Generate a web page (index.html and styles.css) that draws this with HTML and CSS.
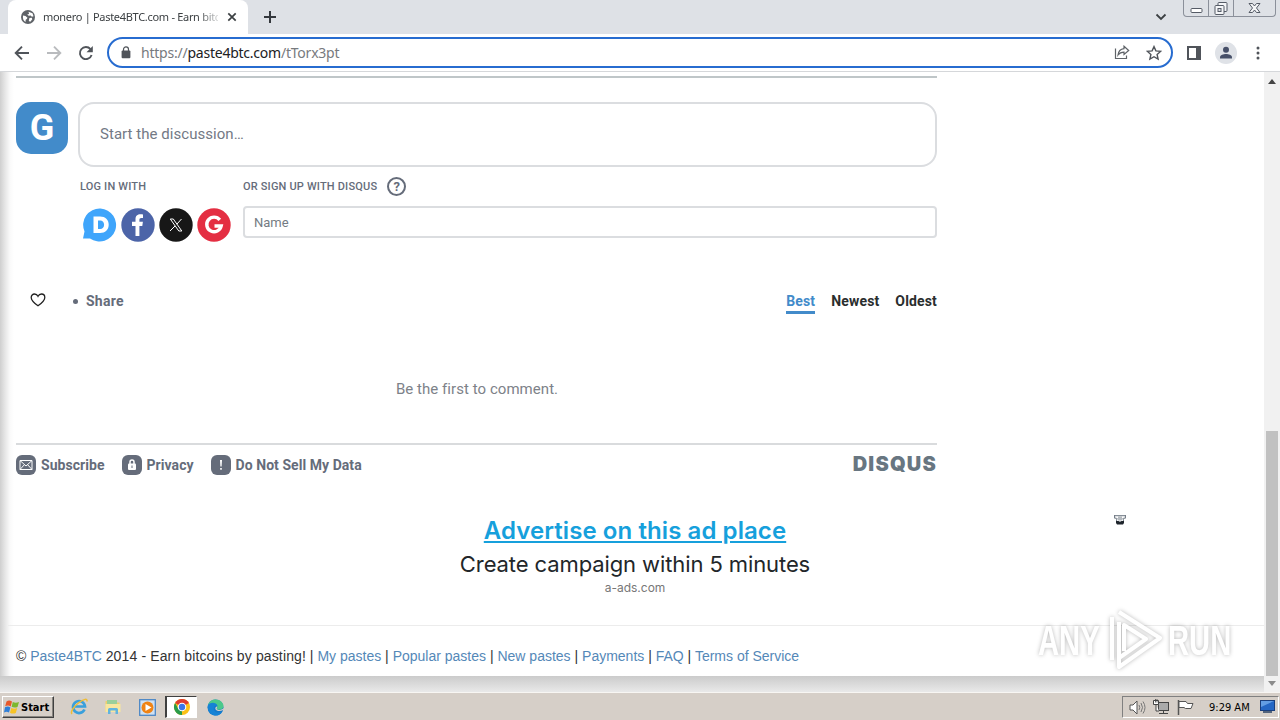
FILE: index.html
```html
<!DOCTYPE html>
<html lang="en">
<head>
  <meta charset="UTF-8" />
  <meta name="viewport" content="width=device-width, initial-scale=1" />
  <title>monero | Paste4BTC.com - Earn bitcoins by pasting!</title>
  <link rel="stylesheet" href="styles.css">
</head>
<body>
  <!-- Tab strip -->
  <div class="tabstrip">
    <div class="tab">
      <svg class="favicon" viewBox="0 0 14 14"><circle cx="7" cy="7" r="7" fill="#5f6368"/><path d="M2 5.500 4.500 6l2 1.700-.7 1.400-1.100.6-.2 2.200C2.700 11 1.500 9 2 5.500zM7.500 1.700l4 1.600 1 3-1.600.4-1.200-1.200-2 .3-1.500-1.300 1.900-.6zM8.400 8l2.400-.2.5 1.400-2 2.600-1.500-.8z" fill="#fff"/></svg>
      <span class="tab-title">monero | Paste4BTC.com - Earn bitc</span>
      <svg class="tab-close" viewBox="0 0 10 10"><path d="M1.300 1.300l7.400 7.400M8.700 1.300L1.300 8.700" stroke="#3c4043" stroke-width="1.700"/></svg>
    </div>
    <svg class="new-tab" viewBox="0 0 12 12"><path d="M6 0v12M0 6h12" stroke="#34383d" stroke-width="2"/></svg>
    <svg class="tab-search" viewBox="0 0 12 8"><path d="M1.500 1.500L6 6l4.500-4.500" fill="none" stroke="#3c4043" stroke-width="1.800"/></svg>
    <div class="win-buttons">
      <span class="win-btn min"><svg width="13" height="16" viewBox="0 0 13 16"><rect x="1" y="8.500" width="11" height="4" rx="1" fill="#fff" stroke="#555b66"/></svg></span>
      <span class="win-btn max"><svg width="14" height="16" viewBox="0 0 14 16"><rect x="4" y="2.500" width="9" height="9" rx="1" fill="#f4f5f7" stroke="#555b66"/><rect x="1" y="5.500" width="9" height="9" rx="1" fill="#f4f5f7" stroke="#555b66"/><rect x="4" y="8.500" width="3" height="3" fill="#dee1e6" stroke="#555b66"/></svg></span>
      <span class="win-btn close"><svg width="13" height="16" viewBox="0 0 13 16"><path d="M1 3.500h3.500L6.500 6l2-2.500H12L8.500 8l3.500 4.500H8.500l-2-2.500-2 2.500H1L4.500 8z" fill="#f4f5f7" stroke="#555b66"/></svg></span>
    </div>
  </div>

  <!-- Toolbar -->
  <div class="toolbar">
    <svg class="nav-icon" width="16" height="16" viewBox="0 0 16 16"><path d="M15 8H2M8 1.700L1.700 8 8 14.300" fill="none" stroke="#50545a" stroke-width="1.900"/></svg>
    <svg class="nav-icon" width="16" height="16" viewBox="0 0 16 16"><path d="M1 8h13M8 1.700L14.300 8 8 14.300" fill="none" stroke="#b9bbbe" stroke-width="1.900"/></svg>
    <svg class="nav-icon" width="16" height="16" viewBox="0 0 16 16"><path d="M13.600 10A6 6 0 1 1 12.500 4.200" fill="none" stroke="#50545a" stroke-width="1.900"/><path d="M14.800 1v6.300H8.500z" fill="#50545a"/></svg>
    <div class="omnibox">
      <svg class="lock" width="10" height="13" viewBox="0 0 10 13"><rect x=".6" y="4.500" width="8.800" height="7.800" rx="1" fill="#50545a"/><path d="M2.500 5V3.400a2.500 2.500 0 0 1 5 0V5" fill="none" stroke="#50545a" stroke-width="1.200"/></svg>
      <span class="url">https://<b>paste4btc.com</b>/tTorx3pt</span>
      <svg class="share-icon" width="16" height="15" viewBox="0 0 16 15"><path d="M1.500 3.500v10h11v-3" fill="none" stroke="#5f6368" stroke-width="1.200"/><path d="M10 1.300L14.700 5.500 10 9.500V7.200C7.500 7.200 5.500 8 4 10c.4-3.500 2.500-6 6-6.400z" fill="none" stroke="#5f6368" stroke-width="1.200"/></svg>
      <svg class="star-icon" width="16" height="16" viewBox="0 0 16 16"><path d="M8 1.600l1.900 4.300 4.700.5-3.500 3.100 1 4.600L8 11.700l-4.100 2.400 1-4.600L1.400 6.400l4.700-.5z" fill="none" stroke="#50545a" stroke-width="1.400"/></svg>
    </div>
    <svg class="side-panel" width="14" height="14" viewBox="0 0 14 14"><rect x="1" y="1" width="12" height="12" fill="none" stroke="#50545a" stroke-width="2"/><path d="M9 1h4v12H9z" fill="#50545a"/></svg>
    <svg class="avatar" width="22" height="22" viewBox="0 0 22 22"><circle cx="11" cy="11" r="11" fill="#dfe2e7"/><circle cx="11" cy="7.700" r="3" fill="#475069"/><path d="M5 16.500v-1.300c0-2 3.500-3.200 6-3.200s6 1.200 6 3.200v1.300z" fill="#475069"/></svg>
    <svg class="menu-dots" width="4" height="14" viewBox="0 0 4 14"><circle cx="2" cy="2" r="1.500" fill="#50545a"/><circle cx="2" cy="7" r="1.500" fill="#50545a"/><circle cx="2" cy="12" r="1.500" fill="#50545a"/></svg>
  </div>

  <!-- Page -->
  <div class="viewport">
    <div class="page">
      <div class="sheet">
        <div class="disqus">
          <div class="composer">
            <div class="user-g">G</div>
            <div class="discussion">Start the discussion…</div>
          </div>

          <div class="auth">
            <div class="login">
              <div class="label">LOG IN WITH</div>
              <div class="social">
                <svg viewBox="0 0 34 34"><path d="M17.500.5A16.500 16.500 0 1 1 7 30.400L0 30.500l1.500-7A16.500 16.500 0 0 1 17.500.5z" fill="#3fa5fb"/><path d="M10.500 8.500h6.600c5.200 0 8.600 3.200 8.600 8.300s-3.400 8.200-8.600 8.200h-6.600zM15 12.500V21h2.200c2.400 0 3.900-1.600 3.900-4.200s-1.500-4.300-3.900-4.300z" fill="#fff"/></svg>
                <svg viewBox="0 0 34 34"><circle cx="17" cy="17" r="16.700" fill="#4c64a8"/><path d="M14.500 28V18H11v-4.200h3.500v-2.600c0-3.500 2-4.900 5-4.900 1 0 2 .1 2.500.2V10h-1.700c-1.500 0-1.900.8-1.900 1.900v1.900h3.500L21.300 18h-2.900v10z" fill="#fff"/></svg>
                <svg viewBox="0 0 34 34"><circle cx="17" cy="17" r="16.700" fill="#171717"/><path d="M11.300 11h3l8.500 12h-3zM22.500 11l-4.700 5.200M16 18l-5 5" fill="none" stroke="#fff" stroke-width="1"/></svg>
                <svg viewBox="0 0 34 34"><circle cx="17" cy="17" r="16.700" fill="#e42e42"/><path d="M22.800 11.900A7.300 7.300 0 1 0 24.200 18H17.500" fill="none" stroke="#fff" stroke-width="3.400"/></svg>
              </div>
            </div>
            <div class="signup">
              <div class="label">OR SIGN UP WITH DISQUS <span class="help">?</span></div>
              <div class="name-field">Name</div>
            </div>
          </div>

          <div class="actions">
            <svg class="heart" width="16" height="14" viewBox="0 0 16 14"><path d="M8 12.800C3.500 9.500 1.200 7 1.200 4.400 1.200 2.400 2.700 1 4.500 1 6 1 7.300 1.900 8 3.300 8.700 1.900 10 1 11.500 1c1.800 0 3.300 1.400 3.300 3.400 0 2.600-2.300 5.100-6.800 8.400z" fill="none" stroke="#222" stroke-width="1.300"/></svg>
            <span class="bullet"></span>
            <span class="share">Share</span>
            <div class="sort">
              <span class="active">Best</span>
              <span>Newest</span>
              <span>Oldest</span>
            </div>
          </div>

          <div class="empty">Be the first to comment.</div>

          <div class="disqus-footer">
            <span class="foot-link"><svg viewBox="0 0 20 20"><rect width="20" height="20" rx="6" fill="#656c7a"/><path d="M4 5.500h12v9H4zM4 5.500l6 5.500 6-5.500M4 14.500l4.300-4.700M16 14.500l-4.300-4.700" fill="none" stroke="#fff" stroke-width="1"/></svg>Subscribe</span>
            <span class="foot-link"><svg viewBox="0 0 20 20"><rect width="20" height="20" rx="6" fill="#656c7a"/><rect x="6" y="8.500" width="8" height="6.500" rx="1" fill="#fff"/><path d="M8 9V7a2 2 0 0 1 4 0v2" fill="none" stroke="#fff" stroke-width="1.500"/><path d="M10 10.500v2.500" stroke="#656c7a"/></svg>Privacy</span>
            <span class="foot-link"><svg viewBox="0 0 20 20"><rect width="20" height="20" rx="6" fill="#656c7a"/><path d="M9 5h2l-.4 6.500H9.400zM9.200 13h1.600v1.700H9.200z" fill="#fff"/></svg>Do Not Sell My Data</span>
            <span class="brand">DISQUS</span>
          </div>
        </div>

        <div class="ad">
          <a class="ad-title">Advertise on this ad place</a>
          <div class="ad-text">Create campaign within 5 minutes</div>
          <div class="ad-site">a-ads.com</div>
          <svg class="ad-badge" width="12" height="10" viewBox="0 0 12 10"><path d="M0 .7h12M.6.500v2.700h1.800M11.400.500v2.700H9.600M5 1.500v4M7 1.500v4M3 3l-.5 3M9 3l.5 3" fill="none" stroke="#5a6470" stroke-width=".9"/><path d="M2 6h2.500l1.500.7L7.500 6H10v2L9 9.500H3L2 8z" fill="#1e252c"/></svg>
        </div>

        <div class="site-footer">© <a>Paste4BTC</a> <span class="tagline">2014 - Earn bitcoins by pasting!</span> | <a>My pastes</a> | <a>Popular pastes</a> | <a>New pastes</a> | <a>Payments</a> | <a>FAQ</a> | <a>Terms of Service</a></div>
      </div>
    </div>
    <div class="scrollbar">
      <span class="arrow-up"></span>
      <span class="thumb"></span>
      <span class="arrow-down"></span>
    </div>

    <!-- Watermark over the page -->
    <div class="watermark">
      <span>ANY</span>
      <svg width="56" height="64" viewBox="0 0 56 64"><path d="M5 52V9M12 14v39M12 4l41 26-41 29V50l27-19L17 17v26" fill="none" stroke="#fff" stroke-width="4" stroke-linejoin="round"/></svg>
      <span>RUN</span>
    </div>
  </div>

  <!-- Taskbar -->
  <div class="taskbar">
    <div class="start">
      <svg width="16" height="16" viewBox="0 0 16 16"><path d="M2.500 2.500C4.500 1 6 1.300 8 2.500L6.700 7.500C5 6.300 3.200 6.300 1.200 7.300z" fill="#e8592b"/><path d="M8.800 2.900c2 1.100 4 1 6.200 0l-1.500 5c-2 1-4 .8-5.900-.1z" fill="#7cb82f"/><path d="M1 8.300c2-1 3.700-1 5.400.1L5 13.500c-1.700-1.200-3.400-1.100-5 0z" fill="#2f7fd8"/><path d="M7.300 8.900c2 1 3.900 1 5.900 0l-1.400 5c-2 1-4 .9-5.800-.2z" fill="#f7c325"/></svg>
      <span>Start</span>
    </div>
    <div class="task"><svg width="18" height="18" viewBox="0 0 18 18"><path d="M14.500 11.500A6 6 0 1 1 15 8.500H5" fill="none" stroke="#3aa0dc" stroke-width="2.700"/><path d="M2 16C0 14 4 8 9 4.500S17.500 0 17 3.500" fill="none" stroke="#efbd35" stroke-width="1.500"/></svg></div>
    <div class="task"><svg width="18" height="18" viewBox="0 0 18 18"><path d="M1.500 3h5l1 1.500h8V14h-14z" fill="#efd06b"/><path d="M3 2h10v4H3z" fill="#9bcf9a"/><path d="M1.500 6h15v8h-15z" fill="#f8e69f"/><path d="M4 16v-4.500Q4 10 5.500 10h7q1.500 0 1.500 1.500V16h-2.500v-3.500h-5V16z" fill="#62b4de"/></svg></div>
    <div class="task"><svg width="17" height="17" viewBox="0 0 17 17"><rect x=".7" y=".7" width="15.600" height="15.600" fill="#cfe1f3" stroke="#4c87c6" stroke-width="1.300"/><circle cx="8.500" cy="8.500" r="6" fill="#f08314"/><path d="M6.500 5l6 3.500-6 3.500z" fill="#fff"/></svg></div>
    <div class="task current"><svg width="18" height="18" viewBox="0 0 18 18"><circle cx="9" cy="9" r="8" fill="#fbc116"/><path d="M9 9L2.070 5A8 8 0 0 1 15.930 5z" fill="#df3c30"/><path d="M9 9v8A8 8 0 0 1 2.070 5L5.500 11z" fill="#2a9b4b"/><circle cx="9" cy="9" r="4.300" fill="#fff"/><circle cx="9" cy="9" r="3.200" fill="#3b76e8"/></svg></div>
    <div class="task"><svg width="17" height="17" viewBox="0 0 17 17"><circle cx="8.500" cy="8.500" r="8" fill="#1479ca"/><path d="M1 6C2.500 2 5 .5 8.500.5c5 0 8 3.500 8 6.500 0 2.500-2 3.800-4.500 3.800-1.500 0-2.300-.5-2.300-1.300 0-.6.7-1 .7-2.300C10.400 5 7 3.500 1 6z" fill="#4bc98b"/><path d="M1 6C4 2.500 9.500 3.500 10.400 7 8 6 6 8 7 11c1 2.500 4.500 3.500 8.300 1.700C13 16.500 9 17.300 6 16 2 14.500 0 10 1 6z" fill="#1683d5"/><path d="M10.300 7.500c-2 0-2.500 2-1.500 3.300 1.500 1.700 4.500 1.500 6.500.8 1.500-1 1.700-2.500 1.700-2.500-2 2.500-7.500 2.200-7.300.3z" fill="#d5d0c9"/></svg></div>
    <div class="tray">
      <svg width="17" height="15" viewBox="0 0 17 15"><path d="M1 5h3l4-4v13L4 10H1z" fill="#fff" stroke="#555"/><path d="M10 5q1.500 2.500 0 5M12 3q3 4.500 0 9M14 1.500q4 6 0 12" fill="none" stroke="#777"/></svg>
      <svg width="17" height="16" viewBox="0 0 17 16"><rect x="5.500" y="3.500" width="10" height="8" fill="#aaa" stroke="#444"/><path d="M10.500 12v2.500M6 14.500h9" stroke="#444"/><path d="M.5 1.500h5v4h-5zM3 5.500V12h3" fill="#fff" stroke="#444"/><path d="M2.500 0v3.500M4 0v3.500" stroke="#444" stroke-width=".8"/></svg>
      <svg width="17" height="15" viewBox="0 0 17 15"><path d="M1.500 0v15" stroke="#555" stroke-width="1.500"/><path d="M2 1.500h7l1.500 2H16l-2 5H8.500L7 7.500H2z" fill="#fff" stroke="#555"/></svg>
      <span class="clock">9:29 AM</span>
      <svg width="15" height="14" viewBox="0 0 15 14"><rect x=".5" y=".5" width="14" height="10" fill="#2567c4" stroke="#1a3f7d"/><path d="M1 1h13L1 7z" fill="#639ee4"/><path d="M3 12h9" stroke="#53647c" stroke-width="2"/></svg>
    </div>
  </div>
</body>
</html>
```
FILE: styles.css
```css
* { box-sizing: border-box; }
body {
  margin: 0;
  width: 1280px;
  height: 720px;
  overflow: hidden;
  background: #fff;
  font-family: Roboto, sans-serif;
  display: flex;
  flex-direction: column;
}
svg { display: block; flex: none; }
span, a { white-space: nowrap; }

/* --- Tab strip --- */
.tabstrip {
  height: 34px;
  flex: none;
  background: #dee1e6;
  display: flex;
  align-items: center;
  padding-left: 8px;
}
.tab {
  width: 240px; height: 34px;
  background: #fff;
  border-radius: 8px 8px 0 0;
  display: flex;
  align-items: center;
  padding-left: 13px;
}
.favicon { width: 14px; height: 14px; }
.tab-title {
  width: 175px;
  margin-left: 8px;
  margin-top: -1px;
  font: 11px "Noto Sans", sans-serif;
  letter-spacing: -.3px;
  color: #3c4043;
  -webkit-mask-image: linear-gradient(to right, #000 155px, rgba(0,0,0,.2) 175px);
  mask-image: linear-gradient(to right, #000 155px, rgba(0,0,0,.2) 175px);
}
.tab-close { width: 10px; height: 10px; margin-left: 9px; }
.new-tab { width: 12px; height: 12px; margin-left: 16px; }
.tab-search { width: 12px; height: 8px; margin-left: auto; margin-right: 16px; }
.win-buttons {
  align-self: flex-start;
  width: 93px; height: 17px;
  margin-right: 4px;
  border: 1px solid #8b909a;
  border-top: none;
  border-radius: 0 0 4px 4px;
  display: flex;
}
.win-btn { display: flex; justify-content: center; border-right: 1px solid #8b909a; }
.min, .max { width: 25px; }
.close { flex: 1; border: none; }

/* --- Toolbar --- */
.toolbar {
  height: 38px;
  flex: none;
  border-bottom: 1px solid #d5d7da;
  display: flex;
  align-items: center;
  padding-left: 14px;
}
.nav-icon { margin-right: 16px; }
.omnibox {
  width: 1066px; height: 31px;
  margin-left: -3px;
  border: 2px solid #276cd0;
  border-radius: 16px;
  display: flex;
  align-items: center;
  padding: 0 9px 0 12px;
}
.url {
  margin-left: 10px;
  font: 14px "Noto Sans", sans-serif;
  letter-spacing: -.23px;
  color: #777a7e;
}
.url b { font-weight: normal; color: #202124; }
.share-icon { margin-left: auto; margin-right: 16px; }
.side-panel { margin-left: 14px; }
.avatar { margin-left: 14px; }
.menu-dots { margin-left: 19px; }

/* --- Viewport --- */
.viewport {
  height: 620px;
  flex: none;
  display: flex;
  position: relative;
}
.page {
  width: 1264px;
  padding-bottom: 16px;
  background: linear-gradient(#cbcbcb, #e9e9e9) bottom / 100% 16px no-repeat;
}
.sheet {
  height: 604px;
  padding-left: 16px;
  background: linear-gradient(to right, #cfcfcf, #e6e6e6 5px, #fafafa 10px, #fff 14px);
}
.disqus {
  width: 921px;
  padding-top: 4px;
}
.composer {
  height: 91px;
  border-top: 2px solid #bfc6c8;
  padding-top: 24px;
  display: flex;
}
.user-g {
  width: 52px; height: 52px;
  border-radius: 15px;
  background: #428bca;
  color: #fff;
  font-weight: 700;
  font-size: 36px;
  line-height: 52px;
  text-align: center;
}
.discussion {
  flex: 1;
  height: 65px;
  margin-left: 10px;
  border: 2px solid #dbdde0;
  border-radius: 16px;
  padding-left: 20px;
  font-size: 15px;
  line-height: 61px;
  letter-spacing: .04px;
  color: #737985;
}
.auth { display: flex; padding-left: 64px; height: 104px; }
.login { width: 163px; }
.signup { flex: 1; }
.label {
  height: 40px;
  padding-bottom: 2px;
  display: flex;
  align-items: center;
  font-size: 11px;
  font-weight: 500;
  letter-spacing: .18px;
  color: #656c7a;
}
.help {
  width: 19px; height: 19px;
  margin-left: 10px;
  border: 2px solid #656c7a;
  border-radius: 50%;
  font-size: 13px;
  font-weight: 700;
  line-height: 15px;
  text-align: center;
}
.social { display: flex; gap: 4px; padding: 1px 0 0 3px; }
.social svg { width: 34px; height: 34px; }
.name-field {
  height: 32px;
  margin-top: -1px;
  border: 2px solid #dbdde0;
  border-radius: 4px;
  padding-left: 9px;
  font-size: 13px;
  line-height: 29px;
  color: #747b83;
}
.actions {
  height: 60px;
  display: flex;
  align-items: center;
  padding-left: 14px;
  font-size: 14px;
  font-weight: 700;
}
.heart { margin-top: -2px; }
.bullet {
  width: 5px; height: 5px;
  margin: 1px 8px 0 27px;
  border-radius: 50%;
  background: #656c7a;
}
.share { color: #656c7a; letter-spacing: .25px; }
.sort { display: flex; gap: 16px; margin-left: auto; color: #2a2e2e; letter-spacing: .15px; }
.sort span { height: 26px; line-height: 26px; }
.sort .active { color: #428bca; border-bottom: 3px solid #428bca; }
.empty {
  height: 112px;
  padding: 48px 0 0 1px;
  font-size: 15px;
  line-height: 20px;
  letter-spacing: .05px;
  text-align: center;
  color: #7d8289;
}
.disqus-footer {
  height: 43px;
  padding-bottom: 2px;
  border-top: 2px solid #d9dbdd;
  display: flex;
  align-items: center;
  font-size: 14px;
  font-weight: 700;
  letter-spacing: .05px;
  color: #656c7a;
}
.foot-link { display: flex; align-items: center; gap: 5px; margin-right: 17px; }
.foot-link svg { width: 20px; height: 20px; }
.brand {
  margin-left: auto;
  font: 900 20px/20px Inter, sans-serif;
  letter-spacing: 1.2px;
  padding-bottom: 1px;
  color: #687681;
}

/* --- Ad --- */
.ad {
  position: relative;
  width: 1238px;
  height: 139px;
  padding-top: 28px;
  text-align: center;
  font-family: Inter, sans-serif;
}
.ad-title {
  display: block;
  font-size: 24px;
  font-weight: 600;
  line-height: 33px;
  letter-spacing: .08px;
  color: #16a0dc;
  text-decoration: underline;
}
.ad-text { font-size: 22px; line-height: 34px; letter-spacing: -.1px; color: #222629; }
.ad-site { font-size: 12px; line-height: 14px; color: #777; }
.ad-badge { position: absolute; left: 1098px; top: 29px; }

/* --- Site footer --- */
.site-footer {
  height: 51px;
  margin-left: -8px;
  padding-left: 8px;
  border-top: 1px solid #ececec;
  font: 14px/60px "Liberation Sans", sans-serif;
  color: #333;
}
.site-footer a { color: #5488b8; }
.tagline { letter-spacing: .13px; }

/* --- Scrollbar --- */
.scrollbar {
  width: 16px;
  background: #f1f1f1;
  display: flex;
  flex-direction: column;
  align-items: center;
}
.arrow-up, .arrow-down { border: 4px solid transparent; }
.arrow-up { margin-top: 3px; border-bottom: 5px solid #454545; }
.thumb { width: 12px; height: 245px; margin-top: auto; background: #c1c1c1; }
.arrow-down { margin-top: 5px; margin-bottom: 2px; border-top: 5px solid #8b8b8b; }

/* --- Watermark --- */
.watermark {
  position: absolute;
  left: 1038px; top: 536px;
  display: flex;
  align-items: center;
  gap: 5px;
  color: #fff;
  font: 700 43px "Liberation Sans", sans-serif;
  filter: drop-shadow(0 0 2px rgba(0,0,0,.28));
}
.watermark span { width: 64px; transform: scaleX(.68); transform-origin: 0 50%; }

/* --- Taskbar --- */
.taskbar {
  height: 28px;
  flex: none;
  background: #d6cfc8;
  border-top: 1px solid #f8f6f3;
  display: flex;
  align-items: center;
  padding: 1px 0 0 2px;
}
.start {
  width: 52px; height: 22px;
  border: 1px solid #fff;
  border-right-color: #404040;
  border-bottom-color: #404040;
  box-shadow: inset -1px -1px #888580;
  display: flex;
  align-items: center;
  gap: 1px;
  padding-left: 1px;
  margin-right: 9px;
  font: bold 11px "DejaVu Sans Condensed", "DejaVu Sans", sans-serif;
  color: #000;
}
.task { width: 32px; height: 22px; margin-right: 2px; display: flex; align-items: center; justify-content: center; }
.task.current { background: #fff; border: 1px solid #fff; border-top-color: #404040; border-left: 2px solid #404040; }
.tray {
  width: 157px; height: 22px;
  margin-left: auto;
  margin-right: 1px;
  border: 1px solid #fff;
  border-top-color: #808080;
  border-left-color: #808080;
  display: flex;
  align-items: center;
  gap: 7px;
  padding-left: 6px;
}
.clock { margin: 0 3px 0 8px; font: 11px "DejaVu Sans Condensed", "DejaVu Sans", sans-serif; color: #000; }
```
